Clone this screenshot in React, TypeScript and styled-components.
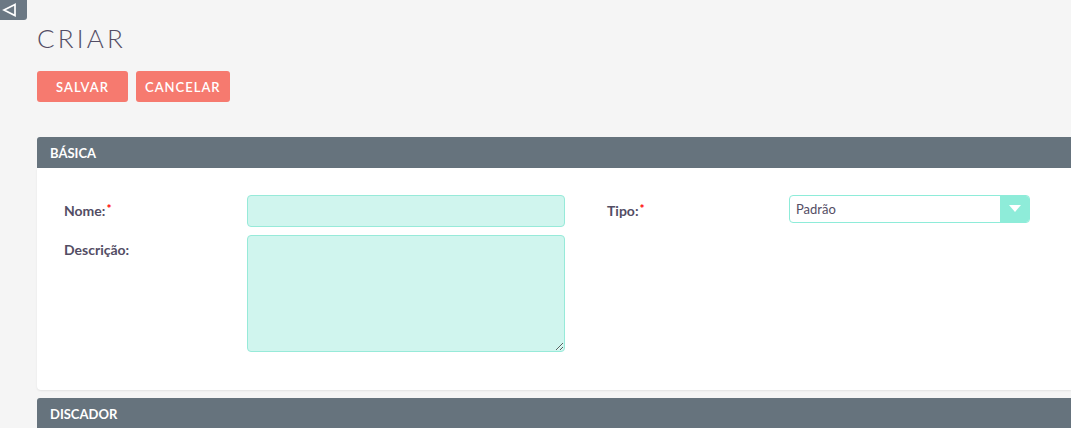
import React from "react"
import styled, { createGlobalStyle } from "styled-components"

const Global = createGlobalStyle`
  html, body {
    margin: 0;
    padding: 0;
    background: #f5f5f5;
    font-family: Lato, "Open Sans", sans-serif;
    overflow: hidden;
  }
`

export default function App() {
  return (
    <>
      <Global />
      <Page>
        <SideToggle>
          <svg width="15" height="14" viewBox="0 0 15 14">
            <path d="M13 1.5 L2 7 L13 12.5 Z" fill="none" stroke="#fff" strokeWidth="1.7" />
          </svg>
        </SideToggle>
        <Title>CRIAR</Title>
        <Actions>
          <Btn>SALVAR</Btn>
          <Btn>CANCELAR</Btn>
        </Actions>

        <PanelHeader>BÁSICA</PanelHeader>
        <PanelBody>
          <FormGrid>
            <Label>
              Nome:<Req>*</Req>
            </Label>
            <TextInput />
            <Label>
              Tipo:<Req>*</Req>
            </Label>
            <Select>
              <SelectText>Padrão</SelectText>
              <SelectArrow>
                <svg width="12" height="8" viewBox="0 0 12 8">
                  <path d="M0 0 H12 L6 7 Z" fill="#fff" />
                </svg>
              </SelectArrow>
            </Select>

            <Label $top>Descrição:</Label>
            <TextArea />
          </FormGrid>
        </PanelBody>

        <PanelHeader $gap>DISCADOR</PanelHeader>
      </Page>
    </>
  )
}

const Page = styled.div`
  position: relative;
  padding: 22px 0 0 37px;
  height: 428px;
  box-sizing: border-box;
`

// sidebar toggle tab, pinned to the corner
const SideToggle = styled.div`
  position: absolute;
  top: 0;
  left: 0;
  width: 27px;
  height: 20px;
  background: #6b7884;
  border-bottom-right-radius: 3px;
  display: flex;
  align-items: center;
  padding-left: 2px;
  box-sizing: border-box;
`

const Title = styled.h1`
  margin: 0;
  font-family: Lato, sans-serif;
  font-weight: 300;
  font-size: 26px;
  line-height: 33px;
  letter-spacing: 3.2px;
  color: #534d64;
`

const Actions = styled.div`
  display: flex;
  gap: 8px;
  margin-top: 16px;
`

const Btn = styled.button`
  height: 31px;
  padding: 0 9px;
  min-width: 91px;
  border: none;
  border-radius: 3px;
  background: #f67a6f;
  color: #fff;
  font-family: Lato, sans-serif;
  font-weight: 600;
  font-size: 13px;
  letter-spacing: 1px;
  cursor: pointer;
`

const PanelHeader = styled.div<{ $gap?: boolean }>`
  margin-top: ${(p) => (p.$gap ? "8px" : "35px")};
  height: 31px;
  background: #66737d;
  border-radius: 3px 0 0 0;
  color: #fff;
  font-weight: 700;
  font-size: 13px;
  display: flex;
  align-items: center;
  padding-left: 13px;
`

const PanelBody = styled.div`
  background: #fff;
  border-radius: 0 0 0 4px;
  box-shadow: 0 1px 2px rgba(0, 0, 0, 0.08);
  padding: 27px 0 38px 27px;
`

// label | field | label | field
const FormGrid = styled.div`
  display: grid;
  grid-template-columns: 183px 360px 182px 241px;
  row-gap: 8px;
`

const Label = styled.div<{ $top?: boolean }>`
  font-size: 14px;
  font-weight: 700;
  color: #534d64;
  padding-top: ${(p) => (p.$top ? "6px" : "0")};
  padding-bottom: ${(p) => (p.$top ? "0" : "3px")};
  align-self: ${(p) => (p.$top ? "start" : "center")};
`

const Req = styled.span`
  color: #ff0000;
  font-size: 12px;
  vertical-align: 3px;
  margin-left: 1px;
`

const TextInput = styled.input`
  width: 318px;
  height: 32px;
  box-sizing: border-box;
  border: 1px solid #97ead9;
  border-radius: 4px;
  background: #d0f5ee;
  outline: none;
`

const TextArea = styled.textarea`
  width: 318px;
  height: 117px;
  box-sizing: border-box;
  border: 1px solid #97ead9;
  border-radius: 4px;
  background: #d0f5ee;
  outline: none;
  resize: both;
  margin: 0;
`

const Select = styled.div`
  width: 241px;
  height: 28px;
  box-sizing: border-box;
  border: 1px solid #8eecd9;
  border-radius: 4px;
  background: #fff;
  display: flex;
  align-items: stretch;
  align-self: start;
  overflow: hidden;
`

const SelectText = styled.div`
  flex: 1;
  display: flex;
  align-items: center;
  padding-left: 6px;
  font-size: 13px;
  color: #534d64;
`

const SelectArrow = styled.div`
  width: 29px;
  background: #8eecd9;
  display: flex;
  align-items: center;
  justify-content: center;
`
